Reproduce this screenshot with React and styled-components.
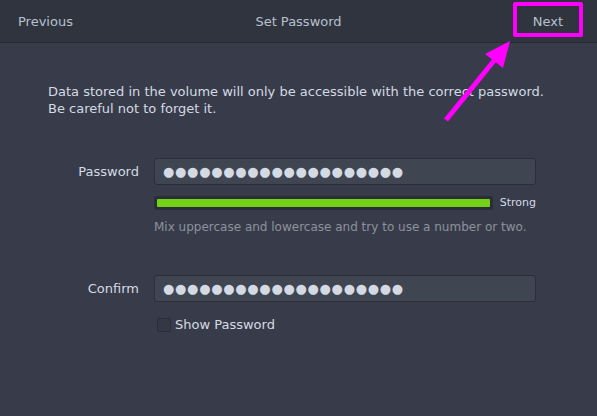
import React from "react";
import styled, { createGlobalStyle } from "styled-components";

const GlobalStyle = createGlobalStyle`
  html, body {
    margin: 0;
    padding: 0;
    background-color: #383c4a;
  }
  body {
    font-family: "DejaVu Sans", "Noto Sans", sans-serif;
    font-size: 13px;
    color: #d3dae3;
  }
`;

const Window = styled.div`
  position: relative;
  width: 597px;
  height: 416px;
  overflow: hidden;
  background-color: #383c4a;
`;

const HeaderBar = styled.div`
  display: grid;
  grid-template-columns: 1fr auto 1fr;
  align-items: center;
  height: 42px;
  padding: 0 18px;
  background-color: #2f343f;
  border-bottom: 1px solid #262a33;
  color: #b8c0cc;
`;

const HeaderButton = styled.div`
  justify-self: ${({ $end }) => ($end ? "end" : "start")};
  margin-right: ${({ $end }) => ($end ? "16px" : "0")};
  line-height: 17px;
`;

const HeaderTitle = styled.div`
  line-height: 17px;
`;

const Body = styled.div`
  display: flex;
  flex-direction: column;
  padding: 40px 0 0 48px;
`;

const Description = styled.p`
  margin: 0;
  line-height: 17px;
`;

const Form = styled.div`
  display: grid;
  grid-template-columns: 91px 382px;
  column-gap: 15px;
  align-items: center;
  margin-top: ${({ $top }) => $top}px;
`;

const Label = styled.div`
  justify-self: end;
  line-height: 17px;
`;

const Entry = styled.div`
  height: 25px;
  padding: 0 8px;
  display: flex;
  align-items: center;
  background-color: #404552;
  border: 1px solid #2b2e39;
  border-radius: 3px;
  color: #d3dae3;
  font-size: 13px;
  letter-spacing: 0.7px;
  white-space: nowrap;
  overflow: hidden;
`;

const Field = styled.div`
  grid-column: 2;
  display: flex;
  align-items: center;
  gap: 7px;
  margin-top: ${({ $top }) => $top}px;
`;

const Trough = styled.div`
  flex: 1;
  height: 8px;
  padding: 2px;
  background-color: #2b2e39;
  border: 1px solid #2b2e39;
  border-radius: 2px;
`;

const Fill = styled.div`
  height: 100%;
  background-color: #73d216;
  border-radius: 1px;
`;

const StrengthText = styled.span`
  font-size: 11px;
  line-height: 14px;
`;

const Hint = styled.div`
  grid-column: 2;
  margin-top: 9px;
  font-size: 12px;
  line-height: 17px;
  color: #8c929c;
  white-space: nowrap;
`;

const Checkbox = styled.span`
  width: 12px;
  height: 12px;
  margin-left: 3px;
  background-color: #343844;
  border: 1px solid #2b2e39;
  border-radius: 2px;
`;

const CheckLabel = styled.span`
  margin-left: -3px;
  line-height: 17px;
`;

const Highlight = styled.div`
  position: absolute;
  left: 513px;
  top: 2px;
  width: 62px;
  height: 27px;
  border: 4px solid #ff00ff;
  border-radius: 2px;
`;

const Arrow = styled.svg`
  position: absolute;
  left: 0;
  top: 0;
  pointer-events: none;
`;

const dots = "●".repeat(20);

export default function App() {
  return (
    <Window>
      <GlobalStyle />
      <HeaderBar>
        <HeaderButton>Previous</HeaderButton>
        <HeaderTitle>Set Password</HeaderTitle>
        <HeaderButton $end>Next</HeaderButton>
      </HeaderBar>
      <Body>
        <Description>
          Data stored in the volume will only be accessible with the correct password.
          <br />
          Be careful not to forget it.
        </Description>
        <Form $top={41}>
          <Label>Password</Label>
          <Entry>{dots}</Entry>
          <Field $top={11}>
            <Trough>
              <Fill style={{ width: "100%" }} />
            </Trough>
            <StrengthText>Strong</StrengthText>
          </Field>
          <Hint>Mix uppercase and lowercase and try to use a number or two.</Hint>
        </Form>
        <Form $top={39}>
          <Label>Confirm</Label>
          <Entry>{dots}</Entry>
          <Field $top={14}>
            <Checkbox />
            <CheckLabel>Show Password</CheckLabel>
          </Field>
        </Form>
      </Body>
      <Highlight />
      <Arrow width="597" height="416" viewBox="0 0 597 416">
        <line x1="446" y1="120" x2="497" y2="57" stroke="#ff00ff" strokeWidth="5" />
        <polygon points="510,41 485,54 503,68" fill="#ff00ff" />
      </Arrow>
    </Window>
  );
}
